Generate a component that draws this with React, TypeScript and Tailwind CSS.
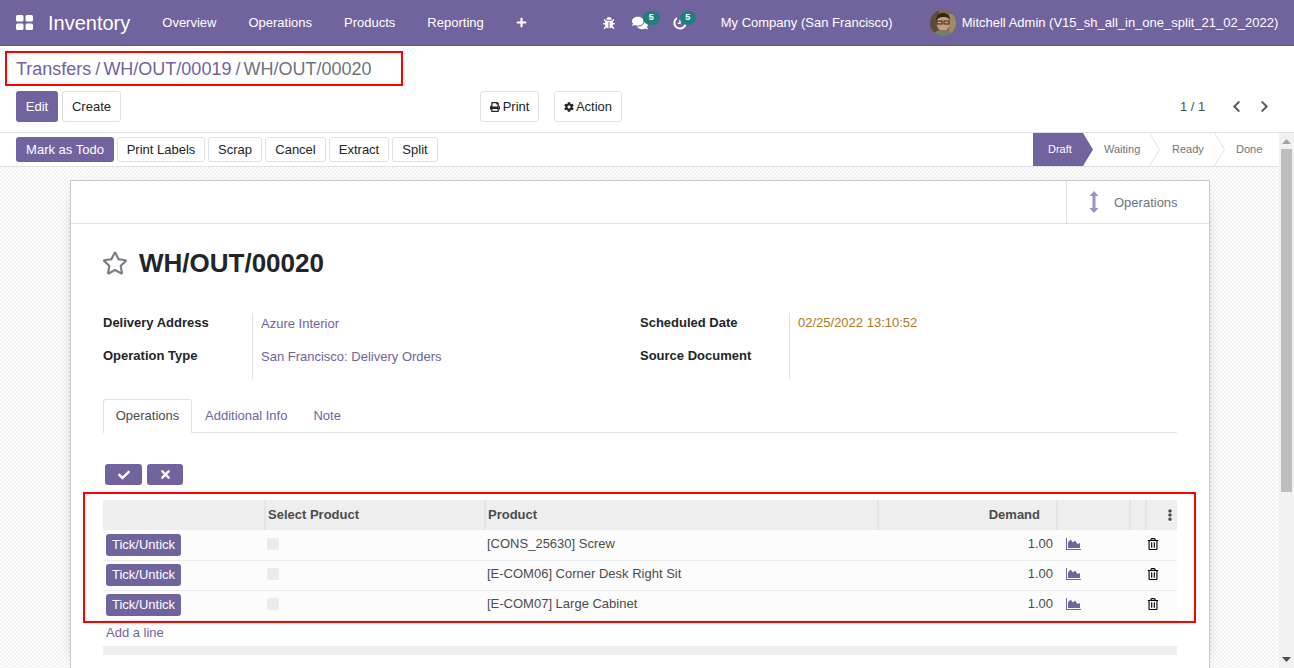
import { FaBug, FaCheck, FaChevronLeft, FaChevronRight, FaCog, FaComments, FaEllipsisV, FaPlus, FaPrint, FaRegStar, FaRegTrashAlt, FaTimes } from "react-icons/fa";

const navLinks = ["Overview", "Operations", "Products", "Reporting"];

const actions = [
  { label: "Print Labels", className: "w-[88px]" },
  { label: "Scrap", className: "w-[54px]" },
  { label: "Cancel", className: "w-[61px]" },
  { label: "Extract", className: "w-[60px]" },
  { label: "Split", className: "w-[46px]" },
];

const lines = ["[CONS_25630] Screw", "[E-COM06] Corner Desk Right Sit", "[E-COM07] Large Cabinet"];

function AppsIcon() {
  return (
    <svg width="17" height="15" viewBox="0 0 17 15" fill="white">
      <rect x="0" y="0" width="7.5" height="6.5" rx="1.5" />
      <rect x="9.5" y="0" width="7.5" height="6.5" rx="1.5" />
      <rect x="0" y="8.5" width="7.5" height="6.5" rx="1.5" />
      <rect x="9.5" y="8.5" width="7.5" height="6.5" rx="1.5" />
    </svg>
  );
}

function ActivityIcon() {
  return (
    <svg width="14" height="14" viewBox="0 0 14 14" fill="none" stroke="white">
      <path d="M4 2.2A5.6 5.6 0 1 0 11 3" strokeWidth="2" />
      <path d="M7 4v3.4H4.8" strokeWidth="1.4" />
    </svg>
  );
}

function AreaChartIcon() {
  return (
    <svg width="15" height="12" viewBox="0 0 15 12" fill="#71639e">
      <path d="M0 0h1v11h14v1H0z" />
      <path d="M2 10V4.5L4.5 1.5 7 4.5 9 2.5 11.5 6 14 5v5z" />
    </svg>
  );
}

function Avatar() {
  return (
    <svg width="26" height="26" viewBox="0 0 26 26" className="rounded-full">
      <rect width="26" height="26" fill="#7d6a4f" />
      <rect x="0" y="0" width="9" height="26" fill="#5d4b38" />
      <rect x="19" y="4" width="7" height="22" fill="#a08a62" />
      <ellipse cx="13" cy="13" rx="6.5" ry="8" fill="#c99d7c" />
      <path d="M6 11c0-6 3-8 7-8s7 2 7 7c-2-3-4-3-7-3s-5 1-7 4z" fill="#33261d" />
      <rect x="7" y="11" width="5" height="3" fill="none" stroke="#33261d" />
      <rect x="14" y="11" width="5" height="3" fill="none" stroke="#33261d" />
      <path d="M3 26c1-5 5-6 10-6s9 1 10 6z" fill="#70806d" />
    </svg>
  );
}

function Chevron() {
  return (
    <svg width="11" height="33" viewBox="0 0 11 33" fill="none" stroke="#dee2e6" className="shrink-0">
      <path d="M0.5 0l10 16.5L0.5 33" />
    </svg>
  );
}

function VerticalArrows() {
  return (
    <svg width="10" height="22" viewBox="0 0 10 22" fill="#9c94c6">
      <path d="M5 0l4.5 5H6.5v12h3L5 22 .5 17h3V5h-3z" />
    </svg>
  );
}

export default function App() {
  return (
    <div className="relative flex h-[668px] w-[1294px] flex-col overflow-hidden bg-white font-['Liberation_Sans',Arial,sans-serif] text-[13px] text-[#4c4c4c]">
      <header className="flex h-[46px] shrink-0 items-center border-b border-[#5f5387] bg-[#71639e] pl-[16px] text-white">
        <AppsIcon />
        <span className="ml-[15px] text-[20px]">Inventory</span>
        {navLinks.map((label) => (
          <span key={label} className="ml-[32px]">{label}</span>
        ))}
        <FaPlus className="ml-[32px] text-[11px]" />
        <FaBug className="ml-[76px] text-[12px]" />
        <span className="relative ml-[17px]">
          <FaComments className="text-[16px]" />
          <span className="absolute -top-[4px] left-[11px] flex h-[14px] w-[17px] items-center justify-center rounded-full bg-[#1f7f7f] text-[9px] font-bold">5</span>
        </span>
        <span className="relative ml-[25px]">
          <ActivityIcon />
          <span className="absolute -top-[5px] left-[7px] flex h-[14px] w-[16px] items-center justify-center rounded-full bg-[#1f7f7f] text-[9px] font-bold">5</span>
        </span>
        <span className="ml-[34px]">My Company (San Francisco)</span>
        <span className="ml-[37px]"><Avatar /></span>
        <span className="ml-[6px]">Mitchell Admin (V15_sh_all_in_one_split_21_02_2022)</span>
      </header>

      <section className="h-[87px] shrink-0 border-b border-[#dee2e6] px-[16px]">
        <div className="flex h-[45px] items-center pt-[1px] text-[18px]">
          <span className="text-[#71639e]">Transfers</span>
          <span className="ml-[4px] mr-[3px] text-[#6c757d]">/</span>
          <span className="text-[#71639e]">WH/OUT/00019</span>
          <span className="ml-[4px] mr-[3px] text-[#6c757d]">/</span>
          <span className="text-[#6c757d]">WH/OUT/00020</span>
        </div>
        <div className="flex h-[31px] items-stretch">
          <button className="w-[42px] rounded-[3px] bg-[#71639e] text-white">Edit</button>
          <button className="ml-[4px] w-[59px] rounded-[3px] border border-[#dee2e6] text-[#212529]">Create</button>
          <button className="ml-[359px] flex w-[59px] items-center justify-center gap-[3px] rounded-[3px] border border-[#dee2e6] text-[#212529]"><FaPrint className="text-[10px]" />Print</button>
          <button className="ml-[15px] flex w-[68px] items-center justify-center gap-[2px] rounded-[3px] border border-[#dee2e6] text-[#212529]"><FaCog className="text-[10px]" />Action</button>
          <span className="ml-[558px] flex items-center">1 / 1</span>
          <span className="ml-[25px] flex items-center text-[13px] text-[#5c5c5c]"><FaChevronLeft /></span>
          <span className="ml-[15px] flex items-center text-[13px] text-[#5c5c5c]"><FaChevronRight /></span>
        </div>
      </section>

      <div className="flex min-h-0 flex-1">
        <main className="flex min-w-0 flex-1 flex-col bg-[image:repeating-conic-gradient(#f1f1f1_0%_25%,#ffffff_0%_50%)] bg-[length:4px_4px]">
          <div className="flex h-[34px] shrink-0 items-center justify-between border-b border-[#dee2e6] bg-white pl-[16px]">
            <div className="flex gap-[3px]">
              <button className="h-[25px] w-[98px] rounded-[3px] bg-[#71639e] text-white">Mark as Todo</button>
              {actions.map((action) => (
                <button key={action.label} className={`h-[25px] rounded-[3px] border border-[#dee2e6] text-[#212529] ${action.className}`}>{action.label}</button>
              ))}
            </div>
            <div className="flex h-[33px] items-center text-[11px] text-[#6c757d]">
              <span className="flex h-full w-[60px] items-center bg-[#71639e] pl-[15px] text-white [clip-path:polygon(0_0,50px_0,60px_50%,50px_100%,0_100%)]">Draft</span>
              <span className="ml-[11px] w-[45px]">Waiting</span>
              <Chevron />
              <span className="ml-[12px] w-[42px]">Ready</span>
              <Chevron />
              <span className="ml-[11px] w-[43px]">Done</span>
            </div>
          </div>

          <div className="ml-[70px] mr-[69px] mt-[13px] min-h-0 flex-1 border border-b-0 border-[#c8c8d0] bg-white shadow-[0_5px_20px_-15px_black]">
            <div className="flex h-[43px] justify-end border-b border-[#dee2e6]">
              <div className="flex w-[143px] items-center border-l border-[#dee2e6] pl-[22px] text-[#6c757d]">
                <VerticalArrows />
                <span className="ml-[15px] pt-[2px]">Operations</span>
              </div>
            </div>

            <div className="px-[32px]">
              <div className="mt-[23px] flex h-[32px] items-center">
                <FaRegStar className="-ml-[1px] text-[26px] text-[#7b7f85]" />
                <h1 className="ml-[11px] text-[26px] font-bold text-[#212529]">WH/OUT/00020</h1>
              </div>

              <div className="mt-[34px] flex">
                <div className="flex w-[537px]">
                  <div className="w-[150px] border-r border-[#dee2e6] font-bold text-[#212529]">
                    <div className="flex h-[33px] items-start">Delivery Address</div>
                    <div className="flex h-[33px] items-start">Operation Type</div>
                  </div>
                  <div className="pl-[8px] text-[#71639e]">
                    <div className="flex h-[33px] items-start pt-[1px]">Azure Interior</div>
                    <div className="flex h-[33px] items-start pt-[1px]">San Francisco: Delivery Orders</div>
                  </div>
                </div>
                <div className="flex">
                  <div className="h-[66px] w-[150px] border-r border-[#dee2e6] font-bold text-[#212529]">
                    <div className="flex h-[33px] items-start">Scheduled Date</div>
                    <div className="flex h-[33px] items-start">Source Document</div>
                  </div>
                  <div className="pl-[8px] text-[#a9791c]">02/25/2022 13:10:52</div>
                </div>
              </div>

              <div className="mt-[20px] flex h-[34px] border-b border-[#dee2e6]">
                <span className="flex h-[34px] w-[89px] items-center justify-center rounded-t-[3px] border border-b-0 border-[#dee2e6] bg-white pb-[1px]">Operations</span>
                <span className="ml-[13px] flex items-center text-[#71639e]">Additional Info</span>
                <span className="ml-[26px] flex items-center text-[#71639e]">Note</span>
              </div>

              <div className="ml-[2px] mt-[31px] flex gap-[5px]">
                <button className="flex h-[21px] w-[37px] items-center justify-center rounded-[3px] bg-[#71639e] text-[12px] text-white"><FaCheck /></button>
                <button className="flex h-[21px] w-[36px] items-center justify-center rounded-[3px] bg-[#71639e] text-[13px] text-white"><FaTimes /></button>
              </div>

              <table className="mt-[15px] w-full table-fixed border-collapse">
                <colgroup>
                  <col className="w-[162px]" />
                  <col className="w-[220px]" />
                  <col className="w-[393px]" />
                  <col className="w-[179px]" />
                  <col className="w-[73px]" />
                  <col className="w-[16px]" />
                  <col className="w-[31px]" />
                </colgroup>
                <thead>
                  <tr className="h-[30px] bg-[#eeeeee] font-bold text-[#4c4c4c]">
                    <th className="border-r-2 border-[#e4e4e4]"></th>
                    <th className="border-r-2 border-[#e4e4e4] pl-[2px] text-left">Select Product</th>
                    <th className="border-r-2 border-[#e4e4e4] pl-[2px] text-left">Product</th>
                    <th className="border-r-2 border-[#e4e4e4] pr-[16px] text-right">Demand</th>
                    <th className="border-r-2 border-[#e4e4e4]"></th>
                    <th className="border-r-2 border-[#e4e4e4]"></th>
                    <th className="text-right"><FaEllipsisV className="ml-auto mr-[1px] text-[12px]" /></th>
                  </tr>
                </thead>
                <tbody>
                  {lines.map((line) => (
                    <tr key={line} className="h-[30px] border-b border-[#e9ecef] bg-[#fcfcfc]">
                      <td className="pl-[3px]">
                        <button className="flex h-[22px] w-[75px] items-center justify-center rounded-[3px] bg-[#71639e] text-white">Tick/Untick</button>
                      </td>
                      <td className="pb-[2px] pl-[2px]"><div className="h-[12px] w-[12px] rounded-[2px] bg-[#e9ecef]"></div></td>
                      <td className="pb-[2px] pl-[2px]">{line}</td>
                      <td className="pb-[2px] pr-[4px] text-right">1.00</td>
                      <td className="pb-[2px] pl-[9px]"><AreaChartIcon /></td>
                      <td></td>
                      <td className="pb-[2px] pl-[1px]"><FaRegTrashAlt className="text-[12px] text-black" /></td>
                    </tr>
                  ))}
                </tbody>
              </table>

              <div className="ml-[3px] mt-[3px] h-[22px] leading-[18px] text-[#71639e]">Add a line</div>
              <div className="h-[9px] bg-[#eeeeee]"></div>
            </div>
          </div>
        </main>

        <div className="flex w-[15px] shrink-0 flex-col items-center bg-[#f1f1f1]">
          <svg width="9" height="5" viewBox="0 0 9 5" fill="#a3a3a3" className="mt-[6px]"><path d="M4.5 0L9 5H0z" /></svg>
          <div className="mt-[5px] h-[343px] w-[11px] bg-[#bdbdbd]"></div>
          <svg width="9" height="5" viewBox="0 0 9 5" fill="#505050" className="mb-[6px] mt-auto"><path d="M0 0h9L4.5 5z" /></svg>
        </div>
      </div>

      <div className="pointer-events-none absolute left-[5px] top-[51px] h-[35px] w-[398px] border-2 border-[#ff0000]"></div>
      <div className="pointer-events-none absolute left-[83px] top-[492px] h-[131px] w-[1113px] border-2 border-[#ff0000]"></div>
    </div>
  );
}
